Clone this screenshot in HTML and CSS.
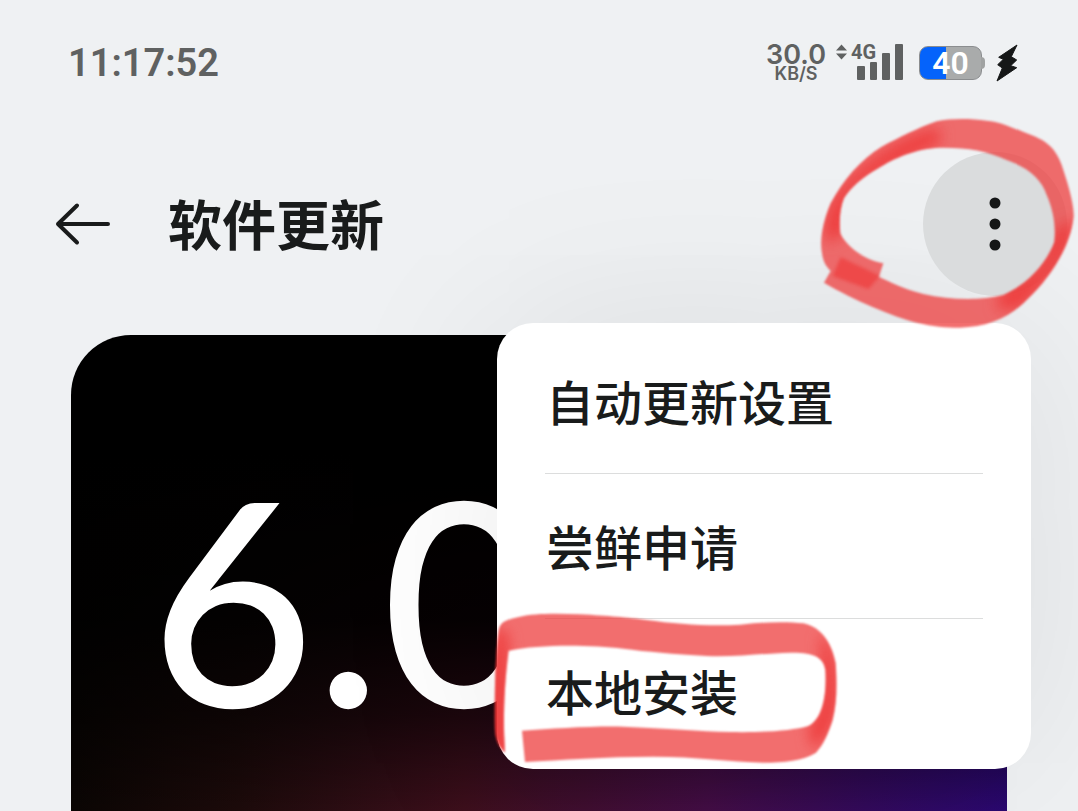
FILE: index.html
```html
<!doctype html>
<html lang="zh-CN">
	<head>
		<meta charset="UTF-8" />
		<meta name="viewport" content="width=device-width, initial-scale=1.0" />
		<title>软件更新</title>
		<link rel="stylesheet" href="styles.css">
	</head>
	<body>
		<div class="status-bar">
			<time class="clock">11:17:52</time>
			<div class="status-icons">
				<div class="net-speed">
					<span class="speed-value">30.0</span>
					<span class="speed-unit">KB/S</span>
				</div>
				<div class="signal">
					<svg class="signal-icon" viewBox="0 0 68 38" aria-hidden="true">
						<path d="M0 8.500L5.500 2.500L11 8.500ZM0 11.500L5.500 17.500L11 11.500Z" />
						<rect x="21" y="24" width="8" height="14" rx="1" />
						<rect x="34" y="20" width="7" height="18" rx="1" />
						<rect x="46" y="11" width="8" height="27" rx="1" />
						<rect x="59" y="2" width="8" height="36" rx="1" />
					</svg>
					<span class="signal-type">4G</span>
				</div>
				<div class="battery"><span class="battery-level">40</span></div>
				<svg class="bolt" viewBox="0 0 24 38" aria-hidden="true">
					<path d="M21 1L2.700 13.300L7.300 15.300L1.700 20.700L6.300 24L1 37L20.700 23.700L14.700 21.700L20.700 16L15.300 12.700Z" />
				</svg>
			</div>
		</div>

		<header class="header">
			<button type="button" class="back" aria-label="返回">
				<svg viewBox="0 0 56 44" aria-hidden="true">
					<path d="M22 3.500L3 22L22 40.500M3 22H53" />
				</svg>
			</button>
			<h1>软件更新</h1>
			<button type="button" class="more" aria-label="更多">
				<svg class="dots" viewBox="0 0 12 54" aria-hidden="true">
					<circle cx="6" cy="6" r="5.500" />
					<circle cx="6" cy="27" r="5.500" />
					<circle cx="6" cy="48" r="5.500" />
				</svg>
				<svg class="mark mark-circle" viewBox="0 0 834 750" aria-hidden="true">
					<defs>
						<path id="circle-ink" d="M115 472L72 548C160 600 280 650 350 668C400 680 435 683 480 683C560 681 625 655 680 600C750 535 812 440 821 350C823 310 800 240 785 195C765 140 735 120 680 100C630 80 600 66 560 62C510 55 450 55 410 64C350 85 300 112 245 140C180 180 130 240 92 310C70 360 58 420 66 460C70 490 82 505 100 520L225 566L250 490C190 480 135 435 121 400C117 360 120 325 132 295C150 265 190 230 235 205C280 175 350 145 420 143C500 142 560 152 620 180C690 205 725 240 740 285C760 330 768 380 763 425C740 490 680 555 610 585C540 603 450 600 370 582C310 568 270 545 238 532C190 510 150 490 115 472Z" />
						<clipPath id="circle-clip"><use href="#circle-ink" /></clipPath>
					</defs>
					<use class="ink" href="#circle-ink" />
					<path class="ink-deep" d="M122 472L98 528L205 567L240 528Z" />
					<g clip-path="url(#circle-clip)">
						<path class="ink-soft" d="M420 85C330 90 160 200 104 290C70 350 70 390 80 430L135 400L150 290C190 240 300 180 420 130Z" />
						<path class="ink-soft" d="M825 360C815 460 740 550 660 625L590 630L600 575C670 550 740 490 750 430C765 390 780 370 825 360Z" />
					</g>
				</svg>
			</button>

			<ul class="menu">
				<li><button type="button">自动更新设置</button></li>
				<li><button type="button">尝鲜申请</button></li>
				<li>
					<button type="button">本地安装</button>
					<svg class="mark mark-box" viewBox="0 0 1140 663" aria-hidden="true">
						<defs>
							<path id="box-ink" d="M75 488C50 465 44 440 44 400C44 300 46 190 56 120C62 92 85 88 120 80C160 70 230 70 300 73C390 78 440 82 500 90C590 102 690 110 780 104C850 96 920 94 970 100C1030 112 1058 170 1067 220C1072 290 1070 340 1058 390C1045 430 1030 465 1008 488C970 512 910 518 850 518C750 515 650 500 520 500C380 500 240 510 135 516L126 422C220 416 330 408 430 410C560 415 660 424 750 426C850 428 940 422 985 408C1030 385 1040 310 1036 240C1030 195 990 188 930 188C850 190 760 202 680 198C580 192 500 185 430 176C330 164 180 162 86 182C76 260 72 330 72 400C72 440 74 450 75 488Z" />
							<clipPath id="box-clip"><use href="#box-ink" /></clipPath>
						</defs>
						<use class="ink" href="#box-ink" />
						<g clip-path="url(#box-clip)">
							<path class="ink-soft" d="M30 500C20 380 30 210 48 110L84 130C90 260 90 370 90 500Z" />
							<path class="ink-soft" d="M1020 130C1080 180 1084 330 1062 390C1045 435 1020 470 995 475L985 410C1020 380 1030 290 1024 220Z" />
						</g>
					</svg>
				</li>
			</ul>
		</header>

		<main>
			<section class="version-card">
				<p class="version">6.0</p>
			</section>
		</main>
	</body>
</html>
```
FILE: styles.css
```css
* {
	box-sizing: border-box;
}
body {
	margin: 0;
	height: 100vh;
	display: flex;
	flex-direction: column;
	overflow: hidden;
	background: #eff1f3;
	color: #191b1b;
	font-family: Inter, "Noto Sans CJK SC", sans-serif;
}
button {
	border: none;
	padding: 0;
	background: none;
	color: inherit;
	font: inherit;
	cursor: pointer;
}

/* status bar */
.status-bar {
	display: flex;
	align-items: center;
	justify-content: space-between;
	flex: none;
	height: 126px;
	padding: 0 58px 0 68px;
	color: #5f6161;
	font-weight: 600;
}
.clock {
	font-family: Roboto, sans-serif;
	font-size: 38px;
}
.status-icons {
	display: flex;
	align-items: center;
}
.net-speed {
	display: flex;
	flex-direction: column;
	align-items: center;
	margin-right: 10px;
}
.speed-value {
	font-size: 27px;
	line-height: 22px;
}
.speed-unit {
	font-size: 18px;
	line-height: 16px;
}
.signal {
	position: relative;
	margin: 0 15px 4px 0;
}
.signal-icon {
	display: block;
	width: 68px;
	height: 38px;
	fill: #5f6161;
}
.signal-type {
	position: absolute;
	top: 0;
	left: 15px;
	font-family: Roboto, sans-serif;
	font-size: 20px;
	line-height: 20px;
	font-weight: 700;
}
.battery {
	position: relative;
	width: 63px;
	height: 34px;
	margin-right: 14px;
	border: 1px solid #8b8d8f;
	border-radius: 9px;
	background: linear-gradient(90deg, #0563fb 42%, #a9abab 42%);
	color: #fff;
	text-align: center;
}
.battery::after {
	content: "";
	position: absolute;
	top: 10px;
	right: -4px;
	width: 4px;
	height: 12px;
	border-radius: 0 4px 4px 0;
	background: #a0a2a2;
}
.battery-level {
	font-family: Roboto, sans-serif;
	font-size: 32px;
	line-height: 32px;
}
.bolt {
	width: 24px;
	height: 38px;
	fill: #151717;
	stroke: #151717;
	stroke-linejoin: round;
}

/* title row */
.header {
	position: relative;
	z-index: 1;
	display: flex;
	align-items: center;
	flex: none;
	height: 196px;
	padding: 0 11px 0 55px;
}
.back {
	width: 56px;
	height: 44px;
}
.back svg {
	display: block;
	fill: none;
	stroke: #191b1b;
	stroke-width: 4;
	stroke-linecap: round;
	stroke-linejoin: round;
}
h1 {
	flex: 1;
	margin: 0 0 0 57px;
	padding-top: 6px;
	font-size: 54px;
	line-height: 72px;
	font-weight: 700;
}
.more {
	position: relative;
	z-index: 2;
	display: flex;
	align-items: center;
	justify-content: center;
	width: 144px;
	height: 144px;
	border-radius: 50%;
	background: #dadcdd;
}
.dots {
	width: 12px;
	height: 54px;
	fill: #151717;
}

/* popup menu */
.menu {
	position: absolute;
	top: 197px;
	right: 47px;
	width: 534px;
	margin: 0;
	padding: 6px 48px;
	list-style: none;
	border-radius: 36px;
	background: #fff;
	box-shadow: 0 0 180px rgba(0, 0, 0, 0.09);
}
.menu li {
	position: relative;
}
.menu li + li {
	border-top: 1px solid #dcdddd;
}
.menu button {
	display: block;
	width: 100%;
	height: 144px;
	padding: 0 0 2px 1px;
	text-align: left;
	font-size: 48px;
	font-weight: 500;
}

/* marker strokes */
.mark {
	position: absolute;
	overflow: visible;
	pointer-events: none;
	filter: blur(1px);
}
.mark-circle {
	top: -52px;
	left: -123px;
	width: 278px;
	height: 250px;
}
.mark-box {
	top: -29px;
	left: -65px;
	width: 380px;
	height: 221px;
}
.ink {
	fill: #ee3b3b;
	fill-opacity: 0.74;
}
.ink-deep {
	fill: #ee3b3b;
	fill-opacity: 0.7;
	filter: blur(4px);
}
.ink-soft {
	fill: #ee3535;
	fill-opacity: 0.8;
	filter: blur(20px);
}

/* version card */
main {
	display: flex;
	flex: 1;
	padding: 13px 71px 0;
}
.version-card {
	flex: 1;
	padding: 112px 79px 0;
	border-radius: 60px 60px 0 0;
	background:
		linear-gradient(180deg, #000 25%, rgba(0, 0, 0, 0.9) 60%, rgba(0, 0, 0, 0.55) 80%, transparent),
		linear-gradient(90deg, #0a0503, #1c0a0a 18%, #3d0f1c 42%, #430d45 68%, #330a5c 85%, #2a0870);
}
.version {
	margin: 0;
	color: #fff;
	font-family: Lato, sans-serif;
	font-size: 284px;
	line-height: 300px;
	font-weight: 500;
}
```
